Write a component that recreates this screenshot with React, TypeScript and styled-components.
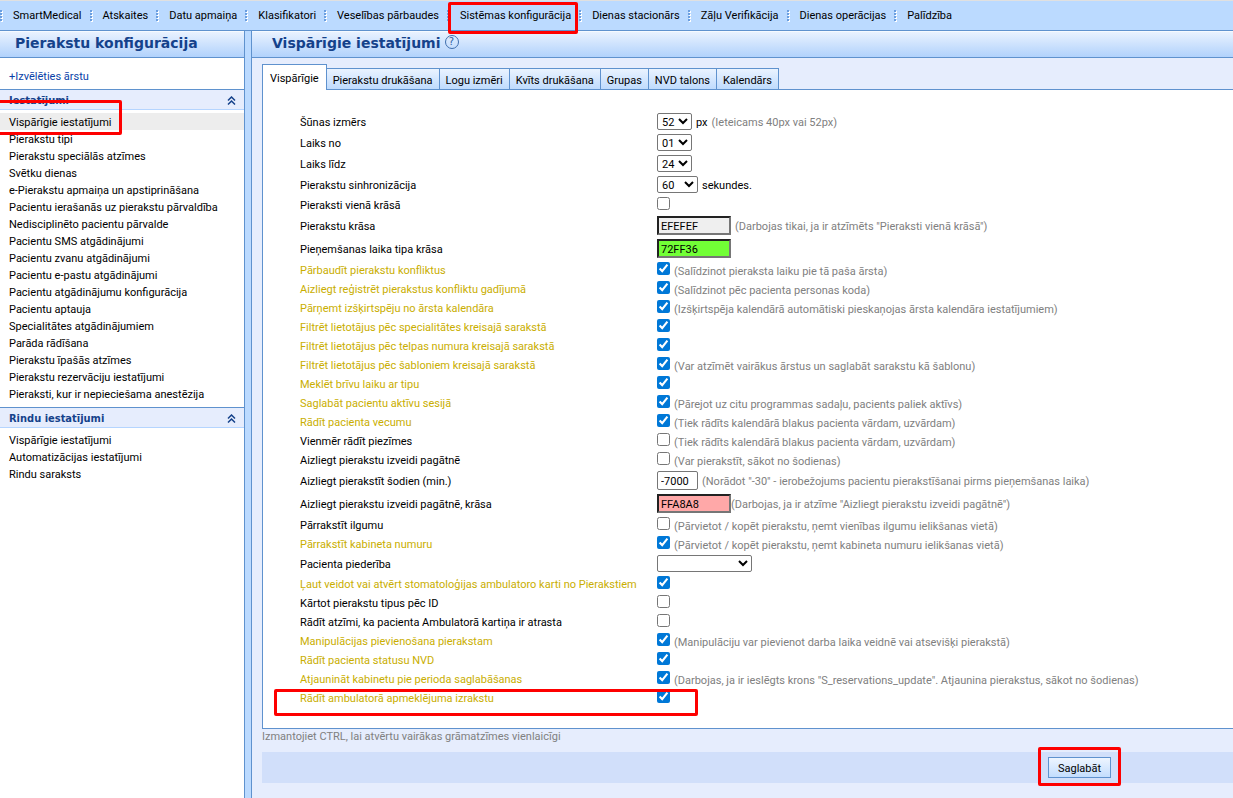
import React from "react";
import styled, { createGlobalStyle, css } from "styled-components";

const line = "#5f92ce";
const navy = "#15428b";
const sky = "#bbdaff";
const pale = "#e6edfd";

const GlobalStyle = createGlobalStyle`
  *, *::before, *::after { box-sizing: border-box; }
  body {
    margin: 0;
    background: ${pale};
    color: #000;
    font: 11px/17px Roboto, "DejaVu Sans Condensed", sans-serif;
  }
  input, select, button { font: inherit; color: inherit; margin: 0; }
  ul { list-style: none; margin: 0; padding: 0; }
  a { color: inherit; text-decoration: none; }
`;

const Page = styled.div`
  display: flex;
  flex-direction: column;
  min-height: 100vh;
  overflow-x: hidden;
`;

const MenuBar = styled.nav`
  display: flex;
  height: 31px;
  background: ${sky};
  border-top: 1px solid #e0e0e0;
  border-bottom: 1px solid ${line};
`;

const MenuItem = styled.div`
  position: relative;
  display: flex;
  align-items: center;
  gap: 10px;
  padding-right: 8px;
  white-space: nowrap;
`;

const Body = styled.div`
  display: flex;
  flex: 1;
`;

const Sidebar = styled.aside`
  flex: 0 0 245px;
  background: #fff;
  border-right: 1px solid ${line};
`;

const Divider = styled.div`
  flex: 0 0 7px;
  background: ${sky};
  border-right: 1px solid ${line};
`;

const Main = styled.main`
  flex: 1;
  min-width: 0;
`;

const TitleBar = styled.header<{ $indent: number }>`
  display: flex;
  align-items: center;
  gap: 4px;
  height: 27px;
  padding: 0 0 2px ${(p) => p.$indent}px;
  background: linear-gradient(#e9f2ff, #b1d2fc);
  border-top: 1px solid #f6faff;
  border-bottom: 1px solid ${line};
`;

const Title = styled.h1`
  margin: 0;
  color: ${navy};
  font: bold 14px/23px "DejaVu Sans", sans-serif;
`;

const HelpButton = styled.button`
  width: 14px;
  height: 14px;
  margin-bottom: 3px;
  padding: 0;
  border: 1px solid #3f6fae;
  border-radius: 50%;
  background: none;
  color: #2f5f9f;
  font: 10px/12px "DejaVu Sans", sans-serif;
`;

const AddLink = styled.a`
  display: block;
  padding: 10px 9px 4px;
  color: #0a3fa8;
`;

const SectionHeader = styled.button`
  display: flex;
  align-items: center;
  justify-content: space-between;
  width: 100%;
  height: 21px;
  padding: 2px 8px 0 9px;
  border: 0;
  border-top: 1px solid ${line};
  border-bottom: 1px solid #b5d5ff;
  background: ${pale};
  color: ${navy};
  font: bold 11px/17px "DejaVu Sans Condensed", sans-serif;
`;

const NavList = styled.ul`
  && { padding: 3px 0 5px; }
`;

const NavItem = styled.li<{ $active?: boolean }>`
  position: relative;
  padding: 2px 0 0 9px;
  line-height: 15px;
  background: ${(p) => (p.$active ? "#ededed" : "none")};
`;

const Content = styled.div`
  padding: 6px 0 0 10px;
`;

const Tabs = styled.div`
  display: flex;
  align-items: flex-end;
  height: 26px;
`;

const Tab = styled.button<{ $active?: boolean }>`
  height: 22px;
  padding: 2px 6px 0;
  border: solid ${line};
  border-width: 1px 1px 1px 0;
  background: linear-gradient(#eaf3ff, #bfdbfd);
  white-space: nowrap;
  ${(p) =>
    p.$active &&
    css`
      height: 26px;
      padding: 2px 7px 0;
      border-width: 1px 1px 0 1px;
      background: #fff;
    `}
`;

const TabFill = styled.div`
  flex: 1;
  border-bottom: 1px solid ${line};
`;

const Panel = styled.form`
  padding: 21px 0 21px 37px;
  background: #fff;
  border-left: 1px solid ${line};
  border-bottom: 1px solid ${line};
`;

const Row = styled.div`
  position: relative;
  display: grid;
  grid-template-columns: 357px 1fr;
`;

const RowLabel = styled.label<{ $gold?: boolean }>`
  align-self: center;
  padding-top: 2px;
  color: ${(p) => (p.$gold ? "#c9ae00" : "#000")};
`;

const Field = styled.div`
  display: flex;
  align-items: flex-start;
  gap: 4px;
  padding: 2px 0;
`;

const CheckField = styled(Field)`
  padding-bottom: 0;
`;

const CheckBox = styled.input`
  flex: none;
  width: 13px;
  height: 13px;
  accent-color: #0078d7;
`;

const Select = styled.select<{ $width: number }>`
  width: ${(p) => p.$width}px;
  height: 17px;
  padding: 1px 0 0;
  border: 1px solid #767676;
  border-radius: 2px;
  background-color: #fff;
`;

const NumberBox = styled.input`
  width: 41px;
  height: 19px;
  padding: 2px 3px 0;
  border: 1px solid #767676;
  border-radius: 2px;
`;

const ColorBox = styled.input<{ $color: string }>`
  width: 74px;
  height: 19px;
  padding: 2px 2px 0;
  border: 2px solid;
  border-color: #222 #767676 #767676 #222;
  background: ${(p) => p.$color};
`;

const FieldText = styled.span`
  padding-top: 2px;
  line-height: 15px;
  white-space: nowrap;
`;

const Hint = styled(FieldText)`
  color: #808080;
`;

const BoxHint = styled(Hint)<{ $tight?: boolean }>`
  margin-left: ${(p) => (p.$tight ? "-4px" : "0")};
  line-height: 17px;
`;

const TabNote = styled.p`
  margin: 0 0 8px;
  color: #808080;
  line-height: 15px;
`;

const ActionBar = styled.footer`
  display: flex;
  justify-content: flex-end;
  padding: 5px 122px 5px 0;
  background: #d1dffa;
`;

const SaveWrap = styled.div`
  position: relative;
  display: flex;
`;

const SaveButton = styled.button`
  width: 63px;
  height: 21px;
  padding: 2px 0 0;
  border: 1px solid ${line};
  background: linear-gradient(#eef5ff, #c3ddfd);
`;

const mark = css`
  position: absolute;
  border: 3px solid #fe0000;
  border-radius: 2px;
  pointer-events: none;
  z-index: 1;
`;

const MenuMark = styled.div`
  ${mark}
  inset: 1px 1px -4px 1px;
`;

const NavMark = styled.div`
  ${mark}
  left: -4px;
  top: -13px;
  width: 126px;
  height: 35px;
`;

const RowMark = styled.div`
  ${mark}
  left: -26px;
  top: 1px;
  width: 424px;
  height: 27px;
`;

const SaveMark = styled.div`
  ${mark}
  inset: -10px -10px -8px -10px;
`;

const Dots = () => (
  <svg width="3" height="12" viewBox="0 0 3 12" aria-hidden="true">
    {[0, 3, 6, 9].map((y) => (
      <g key={y}>
        <rect x="1" y={y + 1} width="2" height="2" fill="#fff" />
        <rect x="0" y={y} width="2" height="2" fill="#6b9fe0" />
      </g>
    ))}
  </svg>
);

const Collapse = () => (
  <svg width="9" height="9" viewBox="0 0 9 9" fill="none" stroke={navy} strokeWidth="1.5" aria-hidden="true">
    <path d="M1 4.5 4.5 1 8 4.5M1 8.5 4.5 5 8 8.5" />
  </svg>
);

const menu = [
  "SmartMedical", "Atskaites", "Datu apmaiņa", "Klasifikatori", "Veselības pārbaudes",
  "Sistēmas konfigurācija", "Dienas stacionārs", "Zāļu Verifikācija", "Dienas operācijas", "Palīdzība",
];

const sections = [
  {
    title: "Iestatījumi",
    active: 0,
    items: [
      "Vispārīgie iestatījumi", "Pierakstu tipi", "Pierakstu speciālās atzīmes", "Svētku dienas",
      "e-Pierakstu apmaiņa un apstiprināšana", "Pacientu ierašanās uz pierakstu pārvaldība",
      "Nedisciplinēto pacientu pārvalde", "Pacientu SMS atgādinājumi", "Pacientu zvanu atgādinājumi",
      "Pacientu e-pastu atgādinājumi", "Pacientu atgādinājumu konfigurācija", "Pacientu aptauja",
      "Specialitātes atgādinājumiem", "Parāda rādīšana", "Pierakstu īpašās atzīmes",
      "Pierakstu rezervāciju iestatījumi", "Pieraksti, kur ir nepieciešama anestēzija",
    ],
  },
  {
    title: "Rindu iestatījumi",
    active: -1,
    items: ["Vispārīgie iestatījumi", "Automatizācijas iestatījumi", "Rindu saraksts"],
  },
];

const tabs = ["Vispārīgie", "Pierakstu drukāšana", "Logu izmēri", "Kvīts drukāšana", "Grupas", "NVD talons", "Kalendārs"];

type Setting = {
  label: string;
  kind: "select" | "check" | "color" | "number";
  value?: string;
  width?: number;
  unit?: string;
  hint?: string;
  tight?: boolean;
  gold?: boolean;
  marked?: boolean;
};

const off = (label: string, hint?: string): Setting => ({ label, kind: "check", hint });
const on = (label: string, hint?: string): Setting => ({ label, kind: "check", value: "1", gold: true, hint });

const settings: Setting[] = [
  { label: "Šūnas izmērs", kind: "select", value: "52", width: 35, unit: "px", hint: "(Ieteicams 40px vai 52px)" },
  { label: "Laiks no", kind: "select", value: "01", width: 35 },
  { label: "Laiks līdz", kind: "select", value: "24", width: 35 },
  { label: "Pierakstu sinhronizācija", kind: "select", value: "60", width: 41, unit: "sekundes." },
  off("Pieraksti vienā krāsā"),
  { label: "Pierakstu krāsa", kind: "color", value: "EFEFEF", hint: '(Darbojas tikai, ja ir atzīmēts "Pieraksti vienā krāsā")' },
  { label: "Pieņemšanas laika tipa krāsa", kind: "color", value: "72FF36" },
  on("Pārbaudīt pierakstu konfliktus", "(Salīdzinot pieraksta laiku pie tā paša ārsta)"),
  on("Aizliegt reģistrēt pierakstus konfliktu gadījumā", "(Salīdzinot pēc pacienta personas koda)"),
  on("Pārņemt izšķirtspēju no ārsta kalendāra", "(Izšķirtspēja kalendārā automātiski pieskaņojas ārsta kalendāra iestatījumiem)"),
  on("Filtrēt lietotājus pēc specialitātes kreisajā sarakstā"),
  on("Filtrēt lietotājus pēc telpas numura kreisajā sarakstā"),
  on("Filtrēt lietotājus pēc šabloniem kreisajā sarakstā", "(Var atzīmēt vairākus ārstus un saglabāt sarakstu kā šablonu)"),
  on("Meklēt brīvu laiku ar tipu"),
  on("Saglabāt pacientu aktīvu sesijā", "(Pārejot uz citu programmas sadaļu, pacients paliek aktīvs)"),
  on("Rādīt pacienta vecumu", "(Tiek rādīts kalendārā blakus pacienta vārdam, uzvārdam)"),
  off("Vienmēr rādīt piezīmes", "(Tiek rādīts kalendārā blakus pacienta vārdam, uzvārdam)"),
  off("Aizliegt pierakstu izveidi pagātnē", "(Var pierakstīt, sākot no šodienas)"),
  { label: "Aizliegt pierakstīt šodien (min.)", kind: "number", value: "-7000", hint: '(Norādot "-30" - ierobežojums pacientu pierakstīšanai pirms pieņemšanas laika)' },
  { label: "Aizliegt pierakstu izveidi pagātnē, krāsa", kind: "color", value: "FFA8A8", tight: true, hint: '(Darbojas, ja ir atzīme "Aizliegt pierakstu izveidi pagātnē")' },
  off("Pārrakstīt ilgumu", "(Pārvietot / kopēt pierakstu, ņemt vienības ilgumu ielikšanas vietā)"),
  on("Pārrakstīt kabineta numuru", "(Pārvietot / kopēt pierakstu, ņemt kabineta numuru ielikšanas vietā)"),
  { label: "Pacienta piederība", kind: "select", value: "", width: 95 },
  on("Ļaut veidot vai atvērt stomatoloģijas ambulatoro karti no Pierakstiem"),
  off("Kārtot pierakstu tipus pēc ID"),
  off("Rādīt atzīmi, ka pacienta Ambulatorā kartiņa ir atrasta"),
  on("Manipulācijas pievienošana pierakstam", "(Manipulāciju var pievienot darba laika veidnē vai atsevišķi pierakstā)"),
  on("Rādīt pacienta statusu NVD"),
  on("Atjaunināt kabinetu pie perioda saglabāšanas", '(Darbojas, ja ir ieslēgts krons "S_reservations_update". Atjaunina pierakstus, sākot no šodienas)'),
  { ...on("Rādīt ambulatorā apmeklējuma izrakstu"), marked: true },
];

function Control({ id, s }: { id: string; s: Setting }) {
  if (s.kind === "check") {
    return (
      <CheckField>
        <CheckBox id={id} type="checkbox" defaultChecked={!!s.value} />
        {s.hint && <Hint>{s.hint}</Hint>}
      </CheckField>
    );
  }
  if (s.kind === "select") {
    return (
      <Field>
        <Select id={id} $width={s.width ?? 35} defaultValue={s.value}>
          <option value={s.value}>{s.value}</option>
        </Select>
        {s.unit && <FieldText>{s.unit}</FieldText>}
        {s.hint && <Hint>{s.hint}</Hint>}
      </Field>
    );
  }
  return (
    <Field>
      {s.kind === "color" ? (
        <ColorBox id={id} type="text" $color={`#${s.value}`} defaultValue={s.value} />
      ) : (
        <NumberBox id={id} type="text" defaultValue={s.value} />
      )}
      {s.hint && <BoxHint $tight={s.tight}>{s.hint}</BoxHint>}
    </Field>
  );
}

export default function App() {
  return (
    <Page>
      <GlobalStyle />
      <MenuBar>
        {menu.map((m) => (
          <MenuItem key={m}>
            <Dots />
            <a href="#">{m}</a>
            {m === "Sistēmas konfigurācija" && <MenuMark />}
          </MenuItem>
        ))}
      </MenuBar>
      <Body>
        <Sidebar>
          <TitleBar $indent={15}>
            <Title as="h2">Pierakstu konfigurācija</Title>
          </TitleBar>
          <AddLink href="#">+Izvēlēties ārstu</AddLink>
          {sections.map((sec) => (
            <section key={sec.title}>
              <SectionHeader type="button">
                {sec.title}
                <Collapse />
              </SectionHeader>
              <NavList>
                {sec.items.map((item, i) => (
                  <NavItem key={item} $active={i === sec.active}>
                    <a href="#">{item}</a>
                    {i === sec.active && <NavMark />}
                  </NavItem>
                ))}
              </NavList>
            </section>
          ))}
        </Sidebar>
        <Divider />
        <Main>
          <TitleBar $indent={20}>
            <Title>Vispārīgie iestatījumi</Title>
            <HelpButton type="button" aria-label="Palīdzība">?</HelpButton>
          </TitleBar>
          <Content>
            <Tabs role="tablist">
              {tabs.map((t, i) => (
                <Tab key={t} type="button" role="tab" aria-selected={i === 0} $active={i === 0}>
                  {t}
                </Tab>
              ))}
              <TabFill />
            </Tabs>
            <Panel>
              {settings.map((s, i) => (
                <Row key={s.label}>
                  <RowLabel htmlFor={`setting-${i}`} $gold={s.gold}>{s.label}</RowLabel>
                  <Control id={`setting-${i}`} s={s} />
                  {s.marked && <RowMark />}
                </Row>
              ))}
            </Panel>
            <TabNote>Izmantojiet CTRL, lai atvērtu vairākas grāmatzīmes vienlaicīgi</TabNote>
            <ActionBar>
              <SaveWrap>
                <SaveButton type="button">Saglabāt</SaveButton>
                <SaveMark />
              </SaveWrap>
            </ActionBar>
          </Content>
        </Main>
      </Body>
    </Page>
  );
}
